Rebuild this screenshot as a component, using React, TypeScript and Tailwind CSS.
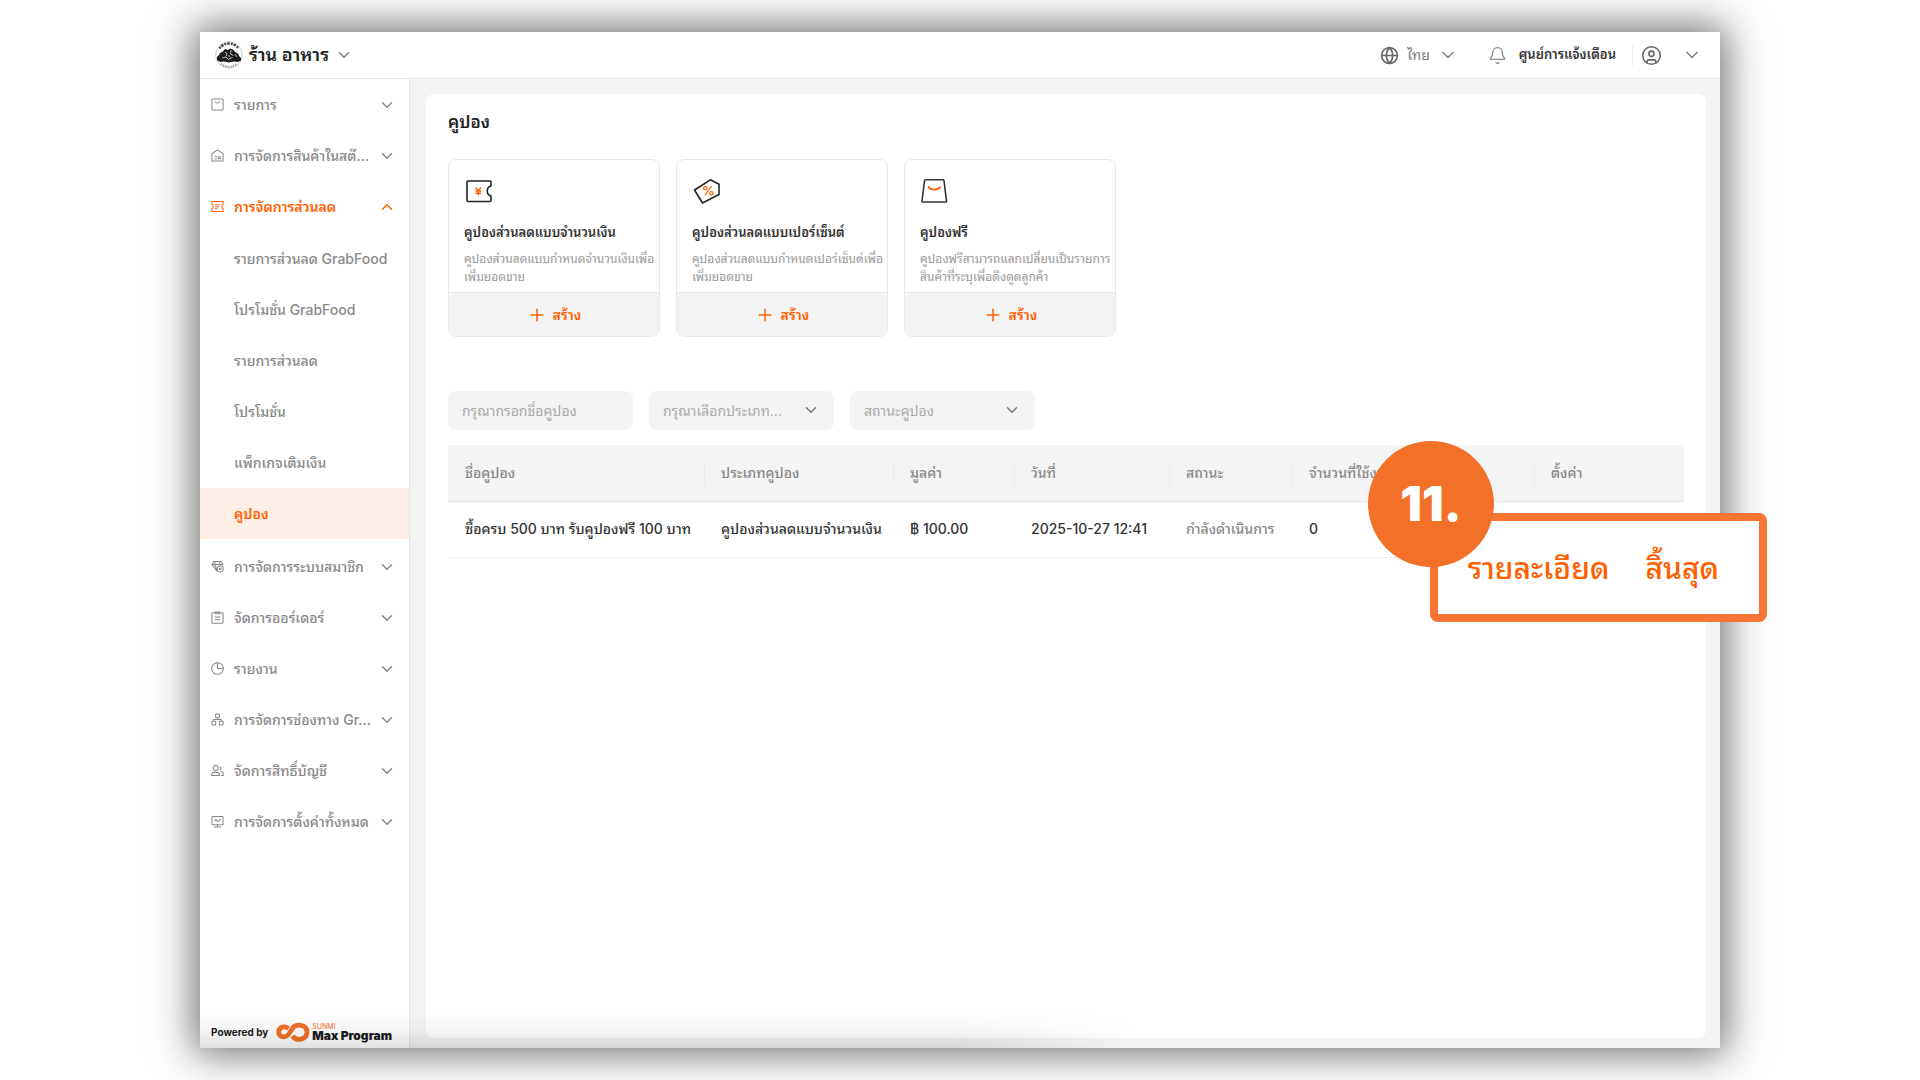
import type { ReactNode } from "react"
import { ChevronDown, ChevronUp, Globe, Bell, CircleUser, Plus } from "lucide-react"

const FONT = "font-[Inter,'Noto_Sans_Thai_Looped',Loma,'Noto_Sans_Thai','Noto_Sans',sans-serif]"

const ICONS: Record<string, ReactNode> = {
  items: (
    <>
      <rect x="1" y="1" width="12" height="12" rx="1" />
      <path d="M4.5 3.5c.6 2.6 4.4 2.6 5 0" />
    </>
  ),
  stock: (
    <>
      <path d="M1 13V5L7 1.2 13 5v8z" />
      <path d="M4 8h2.5M4 10.5h2.5M8 8.5h2v2H8z" />
    </>
  ),
  discount: (
    <>
      <path d="M1 1.5h12v3.2c-1.8.5-1.8 4.1 0 4.6v3.2H1V9.3c1.8-.5 1.8-4.1 0-4.6z" />
      <path d="M4.5 5h5M4.5 7.2h4M4.5 9.4h2.5" />
    </>
  ),
  member: (
    <>
      <path d="M6.5 12 1 4.8 3 1.5h8l2 3.3M1 4.8h12M4.5 1.5 4 4.8l2.5 6M9 1.5l.6 3" />
      <circle cx="10" cy="9.5" r="3.3" />
      <circle cx="10" cy="9.5" r="1" />
    </>
  ),
  orders: (
    <>
      <rect x="1" y="2" width="12" height="11.3" rx="1" />
      <path d="M4.5 1h5v2h-5zM4 6.5h6M4 9.5h6" />
    </>
  ),
  report: (
    <>
      <circle cx="7" cy="7" r="6.3" />
      <path d="M7 1v6h6" />
    </>
  ),
  channel: (
    <>
      <rect x="5" y="1" width="4" height="4" rx=".5" />
      <rect x="1" y="9" width="4" height="4" rx=".5" />
      <rect x="9" y="9" width="4" height="4" rx=".5" />
      <path d="M7 5v2M3 9V7h8v2" />
    </>
  ),
  account: (
    <>
      <circle cx="5" cy="4.2" r="2.7" />
      <path d="M.8 12.3V11c0-3 8.2-3 8.2 0v1.3zM10.5 8c1.5.2 2.7 1 2.7 2.3v2H11" />
      <path d="M9.2 3.2a1.6 1.6 0 1 1 0 3.2" />
    </>
  ),
  settings: (
    <>
      <rect x="1" y="1.5" width="12" height="9" rx=".6" />
      <path d="M3.5 6.5 5.5 5l2 2 3-2.5M7 10.5v2M3 12.8h8" />
    </>
  ),
}

const MENU = [
  { icon: "items", label: "รายการ" },
  { icon: "stock", label: "การจัดการสินค้าในสต๊..." },
  {
    icon: "discount",
    label: "การจัดการส่วนลด",
    open: true,
    children: [
      "รายการส่วนลด GrabFood",
      "โปรโมชั่น GrabFood",
      "รายการส่วนลด",
      "โปรโมชั่น",
      "แพ็กเกจเติมเงิน",
      "คูปอง",
    ],
  },
  { icon: "member", label: "การจัดการระบบสมาชิก" },
  { icon: "orders", label: "จัดการออร์เดอร์" },
  { icon: "report", label: "รายงาน" },
  { icon: "channel", label: "การจัดการช่องทาง Gr..." },
  { icon: "account", label: "จัดการสิทธิ์บัญชี" },
  { icon: "settings", label: "การจัดการตั้งค่าทั้งหมด" },
]

const ACTIVE = "คูปอง"

const COUPON_TYPES = [
  {
    title: "คูปองส่วนลดแบบจำนวนเงิน",
    desc: ["คูปองส่วนลดแบบกำหนดจำนวนเงินเพื่อ", "เพิ่มยอดขาย"],
    icon: (
      <>
        <path
          d="M27 8V4a1 1 0 0 0-1-1H4a1 1 0 0 0-1 1v18.500a1 1 0 0 0 1 1h22a1 1 0 0 0 1-1V18c-5-1.500-5-8.500 0-10z"
          stroke="#222"
          strokeLinejoin="round"
        />
        <path d="m11.500 9.500 2.800 3.200 2.800-3.200M14.300 12.500v5M11.500 13h5.600M11.500 15.200h5.600" stroke="#ff6000" strokeWidth="1.400" />
      </>
    ),
  },
  {
    title: "คูปองส่วนลดแบบเปอร์เซ็นต์",
    desc: ["คูปองส่วนลดแบบกำหนดเปอร์เซ็นต์เพื่อ", "เพิ่มยอดขาย"],
    icon: (
      <>
        <path d="M2.500 12 18.500 1.800 27 6.300v10.200L10.500 25z" stroke="#222" strokeLinejoin="round" />
        <path d="m12.800 17.500 6.700-9.500" stroke="#ff6000" strokeWidth="1.300" />
        <circle cx="13.300" cy="10.300" r="1.700" stroke="#ff6000" strokeWidth="1.200" />
        <circle cx="19.300" cy="15.300" r="1.700" stroke="#ff6000" strokeWidth="1.200" />
      </>
    ),
  },
  {
    title: "คูปองฟรี",
    desc: ["คูปองฟรีสามารถแลกเปลี่ยนเป็นรายการ", "สินค้าที่ระบุเพื่อดึงดูดลูกค้า"],
    icon: (
      <>
        <path
          d="M5.500 1.800H23a1 1 0 0 1 1 1l2.500 20a1 1 0 0 1-1 1.200H3a1 1 0 0 1-1-1.200l2.500-20a1 1 0 0 1 1-1z"
          stroke="#333"
        />
        <path d="M8 8.500c2.800 4.200 9.700 4.200 12.500 0" stroke="#ff6000" />
      </>
    ),
  },
]

const COLUMNS = [
  { label: "ชื่อคูปอง", width: "w-[256px]" },
  { label: "ประเภทคูปอง", width: "w-[189px]" },
  { label: "มูลค่า", width: "w-[121px]" },
  { label: "วันที่", width: "w-[155px]" },
  { label: "สถานะ", width: "w-[123px]" },
  { label: "จำนวนที่ใช้งาน", width: "w-[242px]" },
  { label: "ตั้งค่า", width: "w-[150px]" },
]

function MenuIcon({ name }: { name: string }) {
  return (
    <svg viewBox="0 0 14 14" className="size-[13px] shrink-0" fill="none" stroke="currentColor" strokeWidth="1.1">
      {ICONS[name]}
    </svg>
  )
}

function ShopLogo() {
  return (
    <svg viewBox="0 0 28 28" className="size-7 shrink-0">
      <circle cx="14" cy="14" r="13.3" fill="#fff" stroke="#ccc" strokeWidth="1" />
      <path d="M4.500 7.500A11.500 11.500 0 0 1 23.500 7.500" fill="none" stroke="#444" strokeWidth="2.400" strokeDasharray="2 .8 2.600 1" />
      <path d="M6 22.500a11.500 11.500 0 0 0 16 0" fill="none" stroke="#888" strokeWidth="1.600" strokeDasharray="1.500 1" />
      <path d="M2 19v-3l2-2 1-2 3-1.500 2-2.500 3 1 2-1.500 3 1 2 2.500 3 1.500 1 2.500 2 2v2.500l-3 1.500-4-.5-5 1-5-1-4 .5z" fill="#1c1c1f" />
      <path d="m10 11 2 1.500-1 3M16 9l-.5 4 3 1.500M7 17l4-1 2.500 2.500 4-2M20 13l2 3M13 14.500l2 1" fill="none" stroke="#e5e5e5" strokeWidth=".8" />
    </svg>
  )
}

function Header() {
  return (
    <header className="flex h-[47px] items-center justify-between border-b border-[#e6e6e6] bg-white pl-[15px] pr-[18px]">
      <button type="button" className="flex items-center gap-1.5 text-lg font-semibold text-[#222]">
        <ShopLogo />
        ร้าน อาหาร
        <ChevronDown size={18} strokeWidth={2} className="text-[#888]" />
      </button>
      <div className="flex items-center">
        <button type="button" className="flex items-center gap-2 text-sm text-[#777]">
          <Globe size={19} strokeWidth={2} className="text-[#666]" />
          ไทย
          <ChevronDown size={20} strokeWidth={2} className="text-[#888]" />
        </button>
        <button type="button" className="ml-[30px] flex items-center gap-3 text-[13px] font-semibold text-[#333]">
          <Bell size={19} strokeWidth={1.6} className="text-[#888]" />
          ศูนย์การแจ้งเตือน
        </button>
        <button type="button" aria-label="บัญชี" className="ml-4 flex items-center gap-5 border-l border-[#eee] pl-2">
          <CircleUser size={21} strokeWidth={1.8} className="text-[#666]" />
          <ChevronDown size={20} strokeWidth={2} className="text-[#888]" />
        </button>
      </div>
    </header>
  )
}

function Sidebar() {
  return (
    <aside className="flex w-[210px] shrink-0 flex-col justify-between border-r border-[#e6e6e6] bg-white">
      <nav>
        <ul>
          {MENU.map(m => (
            <li key={m.label}>
              <button
                type="button"
                className={`flex h-[51px] w-full items-center gap-2.5 whitespace-nowrap pl-[11px] pr-[13px] text-sm ${m.open ? "font-semibold text-[#ff6000]" : "font-medium text-[#888]"}`}
              >
                <MenuIcon name={m.icon} />
                <span className="w-0 flex-1 text-left">{m.label}</span>
                {m.open ? <ChevronUp size={18} className="shrink-0" /> : <ChevronDown size={18} className="shrink-0" />}
              </button>
              {m.children && (
                <ul className="pb-0.5 pt-px">
                  {m.children.map(c => (
                    <li key={c}>
                      <a
                        href="#"
                        className={`flex h-[51px] items-center whitespace-nowrap pl-[34px] text-sm ${c === ACTIVE ? "bg-[#ffeee4] font-semibold text-[#ff6000]" : "font-medium text-[#888]"}`}
                      >
                        {c}
                      </a>
                    </li>
                  ))}
                </ul>
              )}
            </li>
          ))}
        </ul>
      </nav>
      <div className="flex items-center gap-2 whitespace-nowrap px-[11px] pb-1.5 text-[#1c1c1f]">
        <span className="text-[10px] font-bold">Powered by</span>
        <div className="flex items-center gap-0.5">
          <svg viewBox="0 0 34 20" className="h-5 w-[34px] shrink-0" fill="none" stroke="#f37028">
            <path d="M12.5 6.5C8 3 2.700 5.500 2.700 10s5.300 6.500 9.300 3L16.500 6.500c3-5.500 14.500-4 14.500 3.500s-10 10-14.500 4" strokeWidth="4.800" />
          </svg>
          <div className="flex flex-col">
            <span className="text-[7px] leading-[7px] text-[#f37028]">SUNMI</span>
            <span className="text-xs font-black leading-3">Max Program</span>
          </div>
        </div>
      </div>
    </aside>
  )
}

function CouponCards() {
  return (
    <div className="mt-[25px] flex flex-wrap gap-4">
      {COUPON_TYPES.map(c => (
        <section key={c.title} className="w-[212px] overflow-hidden rounded-lg border border-[#e9e9e9]">
          <div className="h-[132px] whitespace-nowrap px-[15px] pt-[18px]">
            <svg viewBox="0 0 28 26" className="h-[26px] w-7" fill="none" strokeWidth="1.6">
              {c.icon}
            </svg>
            <h2 className="mt-4 text-[13px] font-semibold leading-6 text-[#333]">{c.title}</h2>
            <p className="mt-1.5 text-xs leading-[18px] text-[#999]">
              {c.desc[0]}
              <br />
              {c.desc[1]}
            </p>
          </div>
          <button
            type="button"
            className="flex h-[44px] w-full items-center justify-center gap-1.5 border-t border-[#e6e6e6] bg-[#f4f4f4] text-sm font-semibold text-[#ff6000]"
          >
            <Plus size={20} strokeWidth={1.8} />
            สร้าง
          </button>
        </section>
      ))}
    </div>
  )
}

function FilterSelect({ label }: { label: string }) {
  return (
    <div className="relative w-[185px]">
      <select
        aria-label={label}
        className="h-[39px] w-full appearance-none rounded-lg bg-[#f4f4f4] pl-3.5 pr-9 text-sm text-[#aaa]"
      >
        <option>{label}</option>
      </select>
      <ChevronDown size={18} className="pointer-events-none absolute right-3.5 top-2.5 text-[#777]" />
    </div>
  )
}

function CouponTable() {
  return (
    <table className="mt-[15px] w-full table-fixed text-left text-sm">
      <thead>
        <tr className="h-14 border-b border-[#e9e9e9] bg-[#f4f4f4] text-[#888]">
          {COLUMNS.map((c, i) => (
            <th key={c.label} className={`${c.width} p-0 font-medium`}>
              <div className={`flex h-6 items-center whitespace-nowrap ${i > 0 ? "border-l border-[#ebebeb] pl-4" : "pl-[17px]"}`}>
                {c.label}
              </div>
            </th>
          ))}
        </tr>
      </thead>
      <tbody>
        <tr className="h-14 whitespace-nowrap border-b border-[#eee] font-medium text-[#333]">
          <td className="pl-[17px]">ซื้อครบ 500 บาท รับคูปองฟรี 100 บาท</td>
          <td className="pl-[17px]">คูปองส่วนลดแบบจำนวนเงิน</td>
          <td className="pl-[17px]">฿ 100.00</td>
          <td className="pl-[17px]">2025-10-27 12:41</td>
          <td className="pl-[17px] text-[#888]">กำลังดำเนินการ</td>
          <td className="pl-[17px]">0</td>
          <td />
        </tr>
      </tbody>
    </table>
  )
}

function Callout() {
  return (
    <div className="absolute -right-[47px] top-[481px] flex h-[109px] w-[337px] items-center justify-end gap-9 whitespace-nowrap rounded-lg border-8 border-[#f87433] bg-white pr-10 text-3xl font-medium text-[#ff6000]">
      <a href="#">รายละเอียด</a>
      <a href="#">สิ้นสุด</a>
      <div className="absolute -left-[70px] -top-20 flex size-[126px] items-center justify-center rounded-full bg-[#f37028] text-5xl font-black text-white">
        11.
      </div>
    </div>
  )
}

export default function App() {
  return (
    <div className={`flex min-h-screen flex-col overflow-hidden bg-white px-[200px] py-8 ${FONT}`}>
      <div className="relative flex flex-1 flex-col bg-[#f4f4f4] shadow-[0_0_38px_6px_rgba(0,0,0,0.57)]">
        <Header />
        <div className="flex flex-1">
          <Sidebar />
          <main className="flex-1 pb-2.5 pl-4 pr-3.5 pt-[15px]">
            <div className="h-full rounded-lg bg-white px-[22px] pt-4">
              <h1 className="text-[17px] font-semibold leading-6 text-[#222]">คูปอง</h1>
              <CouponCards />
              <form className="mt-[54px] flex gap-4">
                <input
                  aria-label="ชื่อคูปอง"
                  placeholder="กรุณากรอกชื่อคูปอง"
                  className="h-[39px] w-[185px] rounded-lg bg-[#f4f4f4] px-3.5 text-sm placeholder:text-[#aaa]"
                />
                <FilterSelect label="กรุณาเลือกประเภท..." />
                <FilterSelect label="สถานะคูปอง" />
              </form>
              <CouponTable />
            </div>
          </main>
        </div>
        <div className="pointer-events-none absolute bottom-0 left-0 h-10 w-[62%] bg-gradient-to-t from-black/12 via-black/3 to-transparent [mask-image:linear-gradient(to_right,black_80%,transparent)]" />
        <Callout />
      </div>
    </div>
  )
}
